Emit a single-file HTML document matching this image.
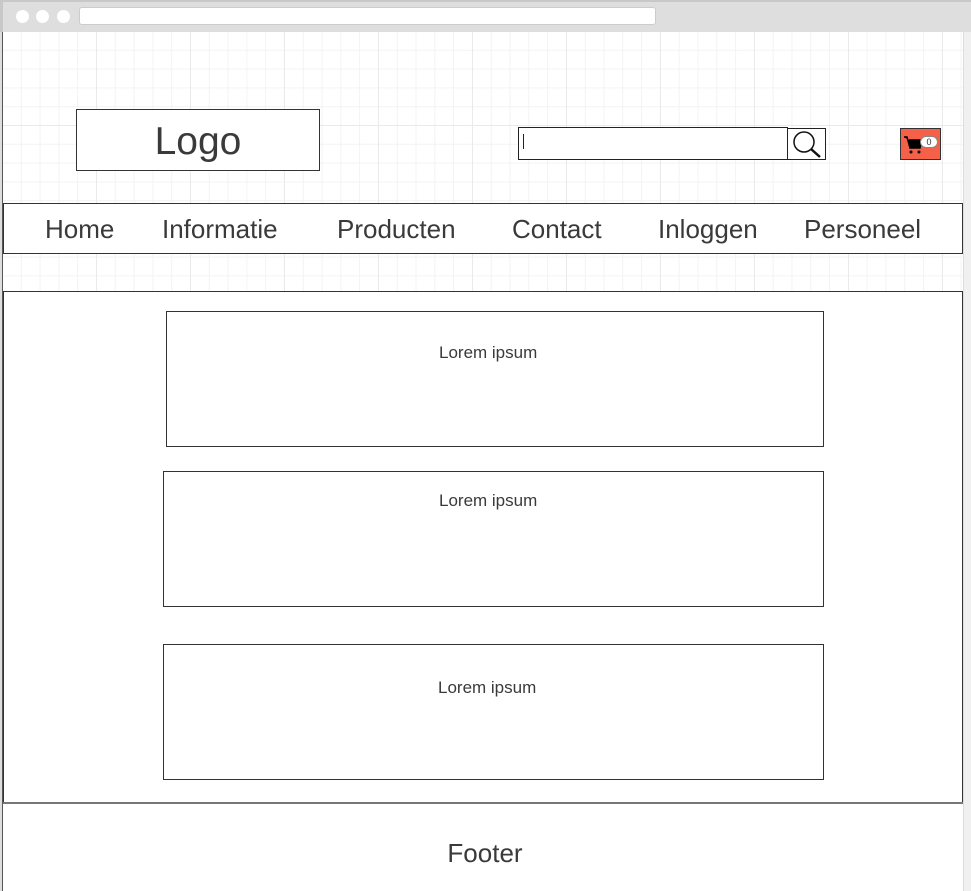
<!DOCTYPE html>
<html><head><meta charset="utf-8"><style>
*{box-sizing:border-box;margin:0;padding:0}
body{width:971px;height:891px;overflow:hidden;background:#fff;font-family:"Liberation Sans",sans-serif;color:#3a3a3a;position:relative}
.abs{position:absolute}
.box{position:absolute;border:1px solid #333;background:#fff}
.grid{background-color:#fff;background-image:
linear-gradient(#eaeaea 1px,transparent 1px),linear-gradient(90deg,#eaeaea 1px,transparent 1px),
linear-gradient(#f3f3f3 1px,transparent 1px),linear-gradient(90deg,#f3f3f3 1px,transparent 1px);
background-size:94px 94px,94px 94px,18.8px 18.8px,18.8px 18.8px;background-position:-1px -1px}
.nav span{position:absolute;top:10px;font-size:26px;color:#3a3a3a}
.lt{position:absolute;top:0;font-size:17px;color:#3a3a3a;white-space:nowrap}
</style></head><body>
<div class="abs" style="left:0;top:0;width:971px;height:32px;background:#dedede;border-top:2px solid #c8c8c8;border-left:3px solid #c8c8c8"></div>
<div class="abs" style="left:16px;top:10px;width:13px;height:13px;border-radius:50%;background:#fff"></div>
<div class="abs" style="left:36px;top:10px;width:13px;height:13px;border-radius:50%;background:#fff"></div>
<div class="abs" style="left:57px;top:10px;width:13px;height:13px;border-radius:50%;background:#fff"></div>
<div class="abs" style="left:79px;top:7px;width:577px;height:18px;border-radius:3px;background:#fff;border:1px solid #ccc"></div>
<div class="abs grid" style="left:3px;top:32px;width:960px;height:260px"></div>
<div class="abs" style="left:0;top:32px;width:3px;height:859px;background:#dedede;border-right:1px solid #555"></div>
<div class="abs" style="left:963px;top:32px;width:8px;height:859px;background:#f0f0f0;border-left:1px solid #ddd"></div>
<div class="box" style="left:76px;top:109px;width:244px;height:62px;text-align:center;font-size:39px;line-height:64px">Logo</div>
<div class="box" style="left:518px;top:127px;width:270px;height:33px;border-color:#222"><div class="abs" style="left:4px;top:6px;width:1px;height:15px;background:#222"></div></div>
<div class="box" style="left:787px;top:128px;width:39px;height:32px;border-color:#222">
<svg width="37" height="30" viewBox="0 0 37 30"><circle cx="16" cy="13" r="10" fill="none" stroke="#111" stroke-width="1.5"/><line x1="23" y1="20" x2="32" y2="28" stroke="#111" stroke-width="2.5"/></svg></div>
<div class="abs" style="left:900px;top:128px;width:41px;height:32px;background:#f46148;border:1px solid #333">
<svg width="41" height="30" viewBox="0 0 41 30"><path d="M3 8h3l3 11h10l2-8H8" fill="#000" stroke="#000" stroke-width="1.5"/><circle cx="10" cy="23" r="1.5" fill="#000"/><circle cx="18" cy="23" r="1.5" fill="#000"/></svg>
<div class="abs" style="left:19px;top:7px;width:18px;height:12px;border-radius:6px;background:#fff;border:1px solid #888;font-size:9px;text-align:center;line-height:10px;color:#333">0</div></div>
<div class="box nav" style="left:3px;top:203px;width:960px;height:51px;border-color:#333">
<span style="left:41px">Home</span><span style="left:158px">Informatie</span><span style="left:333px">Producten</span><span style="left:508px">Contact</span><span style="left:654px">Inloggen</span><span style="left:800px">Personeel</span></div>
<div class="box" style="left:3px;top:291px;width:960px;height:513px;border-color:#333"></div>
<div class="box" style="left:166px;top:311px;width:658px;height:136px"><div class="lt" style="left:272px;top:31px">Lorem ipsum</div></div>
<div class="box" style="left:163px;top:471px;width:661px;height:136px"><div class="lt" style="left:275px;top:19px">Lorem ipsum</div></div>
<div class="box" style="left:163px;top:644px;width:661px;height:136px"><div class="lt" style="left:274px;top:33px">Lorem ipsum</div></div>
<div class="abs" style="left:3px;top:802px;width:960px;height:2px;background:#777"></div>
<div class="abs" style="left:3px;top:838px;width:964px;text-align:center;font-size:26px">Footer</div>
</body></html>
